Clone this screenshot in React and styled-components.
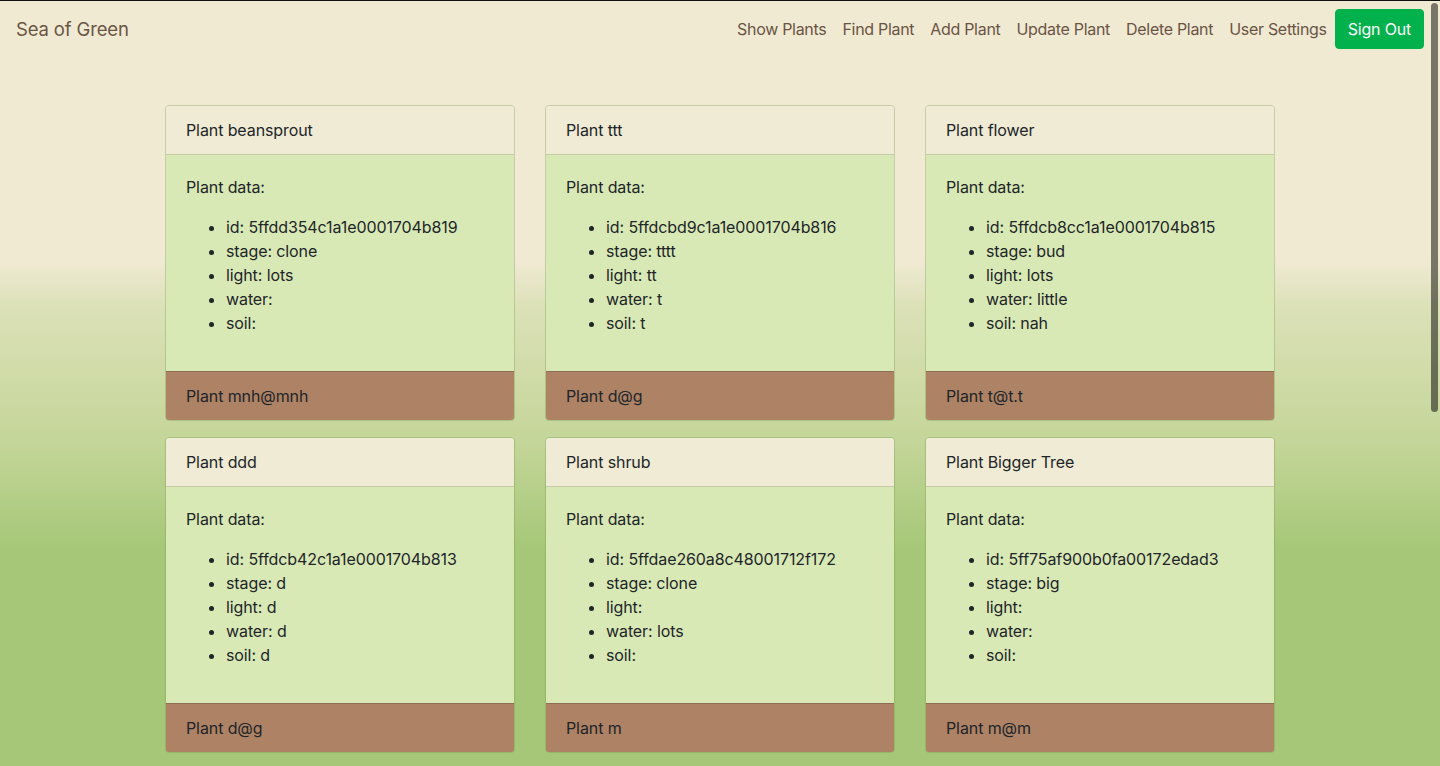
import React from "react";
import styled, { createGlobalStyle } from "styled-components";

const GlobalStyle = createGlobalStyle`
  html {
    scrollbar-width: none;
    background: linear-gradient(to bottom, #f0ead3 0%, #f0ead3 34%, #dce1b8 40%, #c5d69a 57%, #a5c777 72%, #a5c777 100%);
    background-attachment: fixed;
    min-height: 100%;
  }
  html::-webkit-scrollbar {
    display: none;
  }
  body {
    margin: 0;
    font-family: Inter, "Liberation Sans", sans-serif;
    font-size: 16px;
    line-height: 1.5;
    letter-spacing: -0.1px;
    color: #212529;
  }
  * {
    box-sizing: border-box;
  }
`;

const Page = styled.div`
  min-height: 100vh;
  border-top: 1px solid #111;
`;

const Navbar = styled.nav`
  display: flex;
  align-items: center;
  justify-content: space-between;
  padding: 8px 16px;
`;

const Brand = styled.a`
  font-size: 18.5px;
  line-height: 30px;
  letter-spacing: -0.15px;
  color: #6b5444;
  text-decoration: none;
`;

const NavLinks = styled.div`
  display: flex;
  align-items: center;
`;

const NavLink = styled.a`
  padding: 8px;
  color: #6b5444;
  text-decoration: none;
  letter-spacing: -0.3px;
`;

const SignOut = styled.button`
  padding: 7px 12px;
  height: 40px;
  font-family: inherit;
  font-size: 16px;
  line-height: 24px;
  color: #fff;
  background: #00b14c;
  border: 1px solid #00b14c;
  border-radius: 4px;
  letter-spacing: -0.2px;
`;

const Container = styled.main`
  width: 1140px;
  margin: 48px auto 0;
  padding: 0 15px;
`;

const Grid = styled.div`
  display: grid;
  grid-template-columns: repeat(3, 350px);
  column-gap: 30px;
  row-gap: 16px;
`;

const Card = styled.div`
  display: flex;
  flex-direction: column;
  border: 1px solid rgba(120, 150, 80, 0.35);
  border-radius: 4px;
  overflow: hidden;
`;

const CardHeader = styled.div`
  padding: 12px 20px;
  background: #f0ebd4;
  border-bottom: 1px solid rgba(120, 150, 80, 0.35);
`;

const CardBody = styled.div`
  padding: 20px;
  background: #d9e9b5;
`;

const Label = styled.p`
  margin: 0 0 16px;
`;

const DataList = styled.ul`
  margin: 0 0 16px;
  padding-left: 40px;
`;

const CardFooter = styled.div`
  padding: 12px 20px;
  background: #ad8265;
  border-top: 1px solid rgba(80, 60, 40, 0.3);
`;

const ScrollThumb = styled.div`
  position: fixed;
  top: 3px;
  right: 2px;
  width: 7px;
  height: 409px;
  border-radius: 4px;
  background: rgba(0, 0, 0, 0.5);
`;

const plants = [
  { name: "beansprout", id: "5ffdd354c1a1e0001704b819", stage: "clone", light: "lots", water: "", soil: "", owner: "mnh@mnh" },
  { name: "ttt", id: "5ffdcbd9c1a1e0001704b816", stage: "tttt", light: "tt", water: "t", soil: "t", owner: "d@g" },
  { name: "flower", id: "5ffdcb8cc1a1e0001704b815", stage: "bud", light: "lots", water: "little", soil: "nah", owner: "t@t.t" },
  { name: "ddd", id: "5ffdcb42c1a1e0001704b813", stage: "d", light: "d", water: "d", soil: "d", owner: "d@g" },
  { name: "shrub", id: "5ffdae260a8c48001712f172", stage: "clone", light: "", water: "lots", soil: "", owner: "m" },
  { name: "Bigger Tree", id: "5ff75af900b0fa00172edad3", stage: "big", light: "", water: "", soil: "", owner: "m@m" },
];

const links = ["Show Plants", "Find Plant", "Add Plant", "Update Plant", "Delete Plant", "User Settings"];

const App = () => (
  <Page>
    <GlobalStyle />
    <Navbar>
      <Brand href="#">Sea of Green</Brand>
      <NavLinks>
        {links.map((link) => (
          <NavLink key={link} href="#">
            {link}
          </NavLink>
        ))}
        <SignOut>Sign Out</SignOut>
      </NavLinks>
    </Navbar>
    <Container>
      <Grid>
        {plants.map((plant) => (
          <Card key={plant.id}>
            <CardHeader>Plant {plant.name}</CardHeader>
            <CardBody>
              <Label>Plant data:</Label>
              <DataList>
                <li>id: {plant.id}</li>
                <li>stage: {plant.stage}</li>
                <li>light: {plant.light}</li>
                <li>water: {plant.water}</li>
                <li>soil: {plant.soil}</li>
              </DataList>
            </CardBody>
            <CardFooter>Plant {plant.owner}</CardFooter>
          </Card>
        ))}
      </Grid>
    </Container>
    <ScrollThumb />
  </Page>
);

export default App;
